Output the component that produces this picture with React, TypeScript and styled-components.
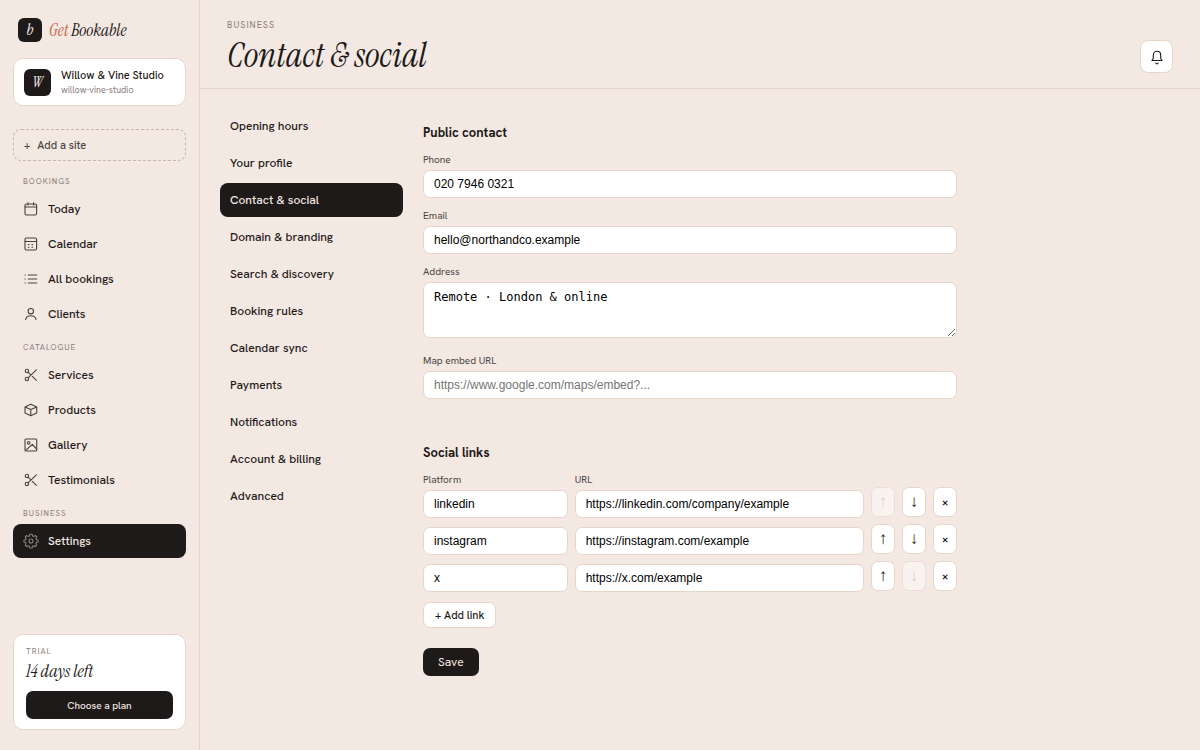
import React from "react";
import styled, { createGlobalStyle, css } from "styled-components";

const sans = `"Hanken Grotesk", "HK Grotesk", Inter, "Liberation Sans", sans-serif`;
const serif = `"Instrument Serif", "Liberation Serif", serif`;

const c = {
  bg: "#f3e8e2",
  line: "#e6d6c9",
  ink: "#1e1a19",
  soft: "#4c4543",
  muted: "#8b807b",
  accent: "#c9654b",
  white: "#ffffff",
};

const Global = createGlobalStyle`
  *, *::before, *::after { box-sizing: border-box; }
  body { margin: 0; background: ${c.bg}; color: ${c.ink}; font-family: ${sans}; font-size: 12px; }
  button, a { font-family: inherit; color: inherit; text-decoration: none; }
  h1, h2, p { margin: 0; }
`;

const Shell = styled.div`
  display: grid;
  grid-template-columns: 200px minmax(0, 1fr);
  min-height: 100vh;
`;

const Sidebar = styled.aside`
  display: flex;
  flex-direction: column;
  padding: 18px 13px 20px;
  border-right: 1px solid ${c.line};
`;

const Brand = styled.a`
  display: flex;
  align-items: center;
  gap: 7px;
  padding-left: 5px;
  height: 24px;
  font: italic 17px/24px ${serif};
`;

const BrandAccent = styled.span`
  color: ${c.accent};
`;

const Tile = styled.span<{ $size: number }>`
  display: grid;
  place-items: center;
  flex: none;
  width: ${(p) => p.$size}px;
  height: ${(p) => p.$size}px;
  border-radius: 6px;
  background: ${c.ink};
  color: ${c.bg};
  font: italic 16px/20px ${serif};
`;

const SiteCard = styled.a`
  display: flex;
  align-items: center;
  gap: 10px;
  height: 48px;
  margin-top: 16px;
  padding: 0 10px;
  background: ${c.white};
  border: 1px solid ${c.line};
  border-radius: 10px;
`;

const SiteText = styled.span`
  display: flex;
  flex-direction: column;
  white-space: nowrap;
`;

const SiteName = styled.span`
  font-size: 11px;
  font-weight: 500;
  line-height: 15px;
`;

const SiteSlug = styled.span`
  font-size: 9px;
  line-height: 14px;
  color: ${c.muted};
`;

const AddSite = styled.button`
  display: flex;
  align-items: center;
  gap: 7px;
  height: 32px;
  margin-top: 23px;
  padding: 0 10px;
  background: transparent;
  border: 1px dashed #c5b7ae;
  border-radius: 8px;
  font-size: 11px;
  font-weight: 500;
  color: ${c.soft};
`;

const Nav = styled.nav`
  display: flex;
  flex-direction: column;
  margin-top: 4px;
`;

const NavGroup = styled.div`
  display: flex;
  flex-direction: column;
  gap: 1px;
`;

const Eyebrow = styled.p<{ $large?: boolean }>`
  font-size: ${(p) => (p.$large ? 9 : 8)}px;
  line-height: 14px;
  letter-spacing: 1px;
  text-transform: uppercase;
  color: ${c.muted};
`;

const NavLabel = styled(Eyebrow)`
  margin: 9px 0 3px;
  padding-left: 10px;
`;

const activeItem = css`
  background: ${c.ink};
  color: ${c.bg};
`;

const NavItem = styled.a<{ $active?: boolean }>`
  display: flex;
  align-items: center;
  gap: 9px;
  height: 34px;
  padding: 0 10px;
  border-radius: 8px;
  font-size: 12px;
  font-weight: 500;
  ${(p) => p.$active && activeItem}
  svg { opacity: ${(p) => (p.$active ? 0.5 : 0.8)}; }
`;

const Trial = styled.section`
  display: flex;
  flex-direction: column;
  margin-top: auto;
  padding: 9px 12px 10px;
  background: ${c.white};
  border: 1px solid ${c.line};
  border-radius: 10px;
`;

const TrialLeft = styled.p`
  margin-bottom: 7px;
  font: italic 18px/26px ${serif};
`;

const PlanButton = styled.button`
  height: 28px;
  border: 0;
  border-radius: 7px;
  background: ${c.ink};
  color: ${c.bg};
  font-size: 10px;
  font-weight: 500;
`;

const Main = styled.main`
  display: flex;
  flex-direction: column;
`;

const Header = styled.header`
  display: flex;
  justify-content: space-between;
  align-items: flex-end;
  height: 89px;
  padding: 0 27px 15px;
  border-bottom: 1px solid ${c.line};
`;

const Title = styled.h1`
  font: italic 35px/36px ${serif};
  margin-top: 5px;
`;

const IconButton = styled.button`
  display: grid;
  place-items: center;
  width: 33px;
  height: 33px;
  padding: 0;
  background: ${c.white};
  border: 1px solid ${c.line};
  border-radius: 8px;
`;

const Body = styled.div`
  display: grid;
  grid-template-columns: 183px minmax(0, 534px);
  gap: 20px;
  padding: 20px;
`;

const SubNav = styled.nav`
  display: flex;
  flex-direction: column;
  gap: 3px;
`;

const SubItem = styled.a<{ $active?: boolean }>`
  height: 34px;
  padding: 0 10px;
  border-radius: 8px;
  font-size: 12px;
  font-weight: 500;
  line-height: 34px;
  ${(p) => p.$active && activeItem}
`;

const Form = styled.form`
  display: flex;
  flex-direction: column;
  padding-top: 13px;
`;

const Section = styled.section`
  display: flex;
  flex-direction: column;
  margin-bottom: 43px;
`;

const SectionTitle = styled.h2`
  font-size: 13px;
  font-weight: 700;
  line-height: 21px;
`;

const Field = styled.label`
  display: flex;
  flex-direction: column;
  gap: 3px;
  margin-top: 10px;
  font-size: 10px;
  line-height: 15px;
  color: ${c.soft};
  ${SectionTitle} + & { margin-top: 9px; }
`;

const control = css`
  width: 100%;
  margin: 0;
  padding: 0 10px;
  border: 1px solid ${c.line};
  border-radius: 7px;
  background: ${c.white};
  color: #000;
  outline: 0;
`;

const Input = styled.input`
  ${control}
  height: 28px;
  font: 12px "Liberation Sans", Arial, sans-serif;
  &::placeholder { color: #757575; }
`;

const TextArea = styled.textarea`
  ${control}
  height: 56px;
  margin-bottom: 5px;
  padding: 7px 10px;
  resize: vertical;
  font: 12px/14px "DejaVu Sans Mono", monospace;
`;

const linkColumns = css`
  display: grid;
  grid-template-columns: minmax(0, 1fr) minmax(0, 2fr) 24px 24px 24px;
  column-gap: 7px;
`;

const LinkHead = styled.div`
  ${linkColumns}
  margin-top: 9px;
  font-size: 10px;
  line-height: 15px;
  color: ${c.soft};
`;

const LinkRow = styled.div`
  ${linkColumns}
  align-items: end;
  height: 31px;
  & + & { margin-top: 6px; }
`;

const SquareButton = styled.button`
  align-self: start;
  height: 30px;
  padding: 0;
  border: 1px solid ${c.line};
  border-radius: 7px;
  background: ${c.white};
  font-size: 12px;
  font-weight: 500;
`;

const ArrowButton = styled(SquareButton)`
  font: 17px/20px "Liberation Sans", Arial, sans-serif;
  &:disabled { color: #cdb9ae; opacity: 0.5; }
`;

const AddLink = styled.button`
  align-self: flex-start;
  height: 26px;
  margin-top: 10px;
  padding: 0 11px;
  border: 1px solid ${c.line};
  border-radius: 7px;
  background: ${c.white};
  font-size: 11px;
  font-weight: 500;
`;

const Save = styled.button`
  align-self: flex-start;
  height: 28px;
  margin-top: 20px;
  padding: 0 15px;
  border: 0;
  border-radius: 7px;
  background: ${c.ink};
  color: ${c.bg};
  font-size: 12px;
`;

const icons: Record<string, React.ReactNode> = {
  today: <><rect x="2" y="3" width="11.6" height="11" rx="1.5" /><path d="M2 6h11.6M5 1.7V4M10.6 1.7V4" /></>,
  calendar: <><rect x="2" y="2" width="11.6" height="12" rx="1.5" /><path d="M2 5.5h11.6M5.3 8.6h.7M8.9 8.6h.7M5.3 11.3h.7M8.9 11.3h.7" /></>,
  list: <path d="M5.3 4H13.7M5.3 8H13.7M5.3 12H13.7M2 4h.3M2 8h.3M2 12h.3" />,
  user: <><circle cx="7.8" cy="5.2" r="2.7" /><path d="M2.6 13.6c.5-2.6 2.5-3.8 5.2-3.8s4.700 1.200 5.200 3.800" /></>,
  scissors: <><circle cx="3.9" cy="4" r="1.7" /><circle cx="3.9" cy="12" r="1.7" /><path d="M13.3 2.8 5.1 10.8M5.1 5.2 7.3 7.3M9.3 9.3l4 4" /></>,
  box: <path d="M7.8 2.2 13.7 4.9v6.2L7.8 13.8 2 11.1V4.9zM2 4.9l5.8 2.7 5.9-2.7M7.8 7.6v6.2" />,
  image: <><rect x="2" y="2" width="11.7" height="12" rx="1" /><circle cx="5.7" cy="5.8" r="1.3" /><path d="m3 13.2 6.3-5.900 4.400 4.700" /></>,
  bell: <path d="M2.9 11.5h10.2l-1.4-2V6.2C11.7 4 10.2 2.3 8 2.3S4.3 4 4.3 6.2v3.3zM6.8 14c.5 1.100 1.900 1.100 2.400 0" />,
  gear: <><circle cx="8" cy="8" r="2" /><path d="M6.9 1.2h2.2l.4 1.7 1.3.5 1.5-.9 1.5 1.5-.9 1.5.5 1.3 1.7.4v1.8l-1.7.4-.5 1.3.9 1.5-1.5 1.5-1.5-.9-1.3.5-.4 1.7H6.9l-.4-1.7-1.3-.5-1.5.9-1.5-1.5.9-1.5-.5-1.3-1.7-.4V7.2l1.7-.4.5-1.3-.9-1.5 1.5-1.5 1.5.9 1.3-.5z" /></>,
};

const Icon = ({ name }: { name: string }) => (
  <svg width="16" height="16" viewBox="0 0 16 16" fill="none" stroke="currentColor" strokeWidth="1.1" strokeLinecap="round" strokeLinejoin="round" aria-hidden="true">
    {icons[name]}
  </svg>
);

const groups = [
  { label: "Bookings", items: [["today", "Today"], ["calendar", "Calendar"], ["list", "All bookings"], ["user", "Clients"]] },
  { label: "Catalogue", items: [["scissors", "Services"], ["box", "Products"], ["image", "Gallery"], ["scissors", "Testimonials"]] },
  { label: "Business", items: [["gear", "Settings"]] },
];

const settings = ["Opening hours", "Your profile", "Contact & social", "Domain & branding", "Search & discovery", "Booking rules", "Calendar sync", "Payments", "Notifications", "Account & billing", "Advanced"];

const links = [
  { platform: "linkedin", url: "https://linkedin.com/company/example" },
  { platform: "instagram", url: "https://instagram.com/example" },
  { platform: "x", url: "https://x.com/example" },
];

export default function App() {
  return (
    <>
      <Global />
      <Shell>
        <Sidebar>
          <Brand href="#">
            <Tile $size={24}>b</Tile>
            <span><BrandAccent>Get</BrandAccent> Bookable</span>
          </Brand>
          <SiteCard href="#">
            <Tile $size={27}>W</Tile>
            <SiteText>
              <SiteName>Willow &amp; Vine Studio</SiteName>
              <SiteSlug>willow-vine-studio</SiteSlug>
            </SiteText>
          </SiteCard>
          <AddSite type="button"><span>+</span>Add a site</AddSite>
          <Nav aria-label="Main">
            {groups.map((g) => (
              <NavGroup key={g.label}>
                <NavLabel>{g.label}</NavLabel>
                {g.items.map(([icon, text]) => (
                  <NavItem key={text} href="#" $active={text === "Settings"}>
                    <Icon name={icon} />
                    {text}
                  </NavItem>
                ))}
              </NavGroup>
            ))}
          </Nav>
          <Trial>
            <Eyebrow>Trial</Eyebrow>
            <TrialLeft>14 days left</TrialLeft>
            <PlanButton type="button">Choose a plan</PlanButton>
          </Trial>
        </Sidebar>
        <Main>
          <Header>
            <div>
              <Eyebrow $large>Business</Eyebrow>
              <Title>Contact &amp; social</Title>
            </div>
            <IconButton type="button" aria-label="Notifications"><Icon name="bell" /></IconButton>
          </Header>
          <Body>
            <SubNav aria-label="Settings">
              {settings.map((s) => (
                <SubItem key={s} href="#" $active={s === "Contact & social"}>{s}</SubItem>
              ))}
            </SubNav>
            <Form onSubmit={(e) => e.preventDefault()}>
              <Section>
                <SectionTitle>Public contact</SectionTitle>
                <Field>Phone<Input type="tel" defaultValue="020 7946 0321" /></Field>
                <Field>Email<Input type="email" defaultValue="hello@northandco.example" /></Field>
                <Field>Address<TextArea defaultValue="Remote · London & online" /></Field>
                <Field>Map embed URL<Input type="url" placeholder="https://www.google.com/maps/embed?..." /></Field>
              </Section>
              <SectionTitle>Social links</SectionTitle>
              <LinkHead>
                <label htmlFor="platform-0">Platform</label>
                <label htmlFor="url-0">URL</label>
              </LinkHead>
              {links.map((l, i) => (
                <LinkRow key={l.platform}>
                  <Input id={`platform-${i}`} aria-label="Platform" defaultValue={l.platform} />
                  <Input id={`url-${i}`} aria-label="URL" defaultValue={l.url} />
                  <ArrowButton type="button" aria-label="Move up" disabled={i === 0}>↑</ArrowButton>
                  <ArrowButton type="button" aria-label="Move down" disabled={i === links.length - 1}>↓</ArrowButton>
                  <SquareButton type="button" aria-label="Remove">×</SquareButton>
                </LinkRow>
              ))}
              <AddLink type="button">+ Add link</AddLink>
              <Save type="submit">Save</Save>
            </Form>
          </Body>
        </Main>
      </Shell>
    </>
  );
}
